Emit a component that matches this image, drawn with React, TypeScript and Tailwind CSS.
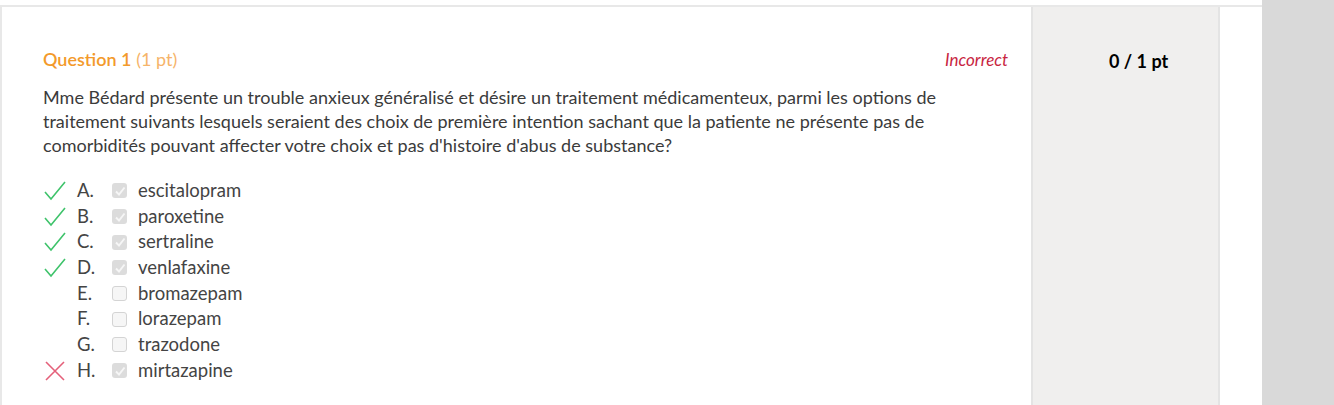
import React from "react";

type Option = { letter: string; label: string; checked: boolean; mark: "ok" | "bad" | null };

const options: Option[] = [
  { letter: "A.", label: "escitalopram", checked: true, mark: "ok" },
  { letter: "B.", label: "paroxetine", checked: true, mark: "ok" },
  { letter: "C.", label: "sertraline", checked: true, mark: "ok" },
  { letter: "D.", label: "venlafaxine", checked: true, mark: "ok" },
  { letter: "E.", label: "bromazepam", checked: false, mark: null },
  { letter: "F.", label: "lorazepam", checked: false, mark: null },
  { letter: "G.", label: "trazodone", checked: false, mark: null },
  { letter: "H.", label: "mirtazapine", checked: true, mark: "bad" },
];

function Mark({ kind }: { kind: Option["mark"] }) {
  if (kind === "ok") {
    return (
      <svg width="24" height="24" viewBox="0 0 24 24" fill="none">
        <path d="M2 13 L8 20 L22 3" stroke="#3fc36b" strokeWidth="1.6" />
      </svg>
    );
  }
  if (kind === "bad") {
    return (
      <svg width="24" height="24" viewBox="0 0 24 24" fill="none">
        <path d="M3 3 L21 21 M21 3 L3 21" stroke="#e4607a" strokeWidth="1.6" />
      </svg>
    );
  }
  return <span className="w-6 h-6" />;
}

function Box({ checked }: { checked: boolean }) {
  return checked ? (
    <span className="w-[15px] h-[15px] rounded-[3px] bg-[#dcdcdc] flex items-center justify-center">
      <svg width="12" height="12" viewBox="0 0 12 12" fill="none">
        <path d="M2 6.5 L5 9.5 L10.5 2.5" stroke="#f6f6f6" strokeWidth="1.9" />
      </svg>
    </span>
  ) : (
    <span className="w-[15px] h-[15px] rounded-[3px] bg-[#f6f6f6] border border-[#d4d4d4]" />
  );
}

export default function App() {
  return (
    <div className="h-[405px] w-[1334px] flex bg-white overflow-hidden font-['Lato',sans-serif] text-[#3b3b3b]">
      <div className="flex-1 pt-[5px]">
        <div className="h-full flex border-t-2 border-l-2 border-[#e8e8e8]">
          <div className="flex-1 pl-[41px] pr-[23px] pt-[39px]">
            <div className="flex items-baseline justify-between">
              <h2 className="text-[18px] text-[#f39a2b]">
                <span className="font-semibold">Question 1</span>{" "}
                <span className="text-[#f6b46a]">(1 pt)</span>
              </h2>
              <span className="italic text-[17px] text-[#c8253f]">Incorrect</span>
            </div>
            <p className="mt-[12px] text-[18px] leading-[24px] max-w-[930px]">
              Mme Bédard présente un trouble anxieux généralisé et désire un traitement médicamenteux, parmi les options de
              traitement suivants lesquels seraient des choix de première intention sachant que la patiente ne présente pas de
              comorbidités pouvant affecter votre choix et pas d'histoire d'abus de substance?
            </p>
            <ul className="mt-[21px] flex flex-col">
              {options.map((o) => (
                <li key={o.letter} className="h-[25.7px] flex items-center text-[18.5px] text-[#444]">
                  <span className="w-[34px] flex items-center">
                    <Mark kind={o.mark} />
                  </span>
                  <span className="w-[35px]">{o.letter}</span>
                  <span className="w-[26px] flex items-center">
                    <Box checked={o.checked} />
                  </span>
                  <span>{o.label}</span>
                </li>
              ))}
            </ul>
          </div>
          <div className="w-[189px] bg-[#f0efee] border-l-2 border-r-2 border-[#e4e4e4] pt-[41px] pl-[76px]">
            <span className="font-bold text-[18px] text-black">0 / 1 pt</span>
          </div>
          <div className="w-[42px]" />
        </div>
      </div>
      <div className="w-[72px] bg-[#d9d9d9]" />
    </div>
  );
}
